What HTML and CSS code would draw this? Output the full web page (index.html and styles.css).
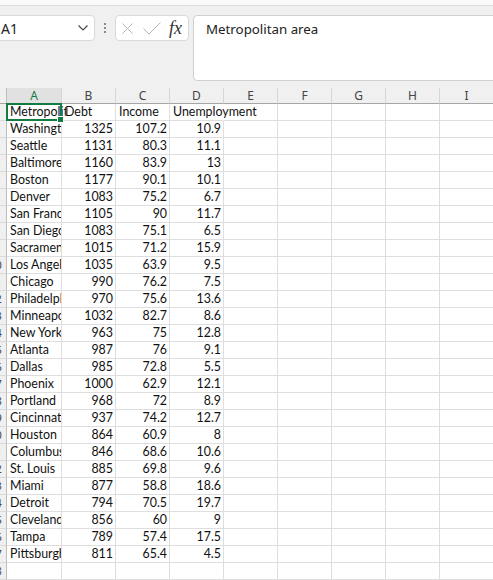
FILE: index.html
```html
<!DOCTYPE html>
<html>
<head>
<meta charset="utf-8">
<link rel="stylesheet" href="styles.css">
</head>
<body>
<div class="topstrip"></div>
<div class="formula-row">
  <div class="namebox">
    <span class="ref">A1</span>
    <svg class="chev" width="10" height="6" viewBox="0 0 10 6"><path d="M0.5 0.5 L5 5 L9.5 0.5" fill="none" stroke="#444" stroke-width="1.1"/></svg>
  </div>
  <div class="dots"><span></span><span></span><span></span></div>
  <div class="fxbox">
    <svg class="ic-x" width="11" height="11" viewBox="0 0 11 11"><path d="M0.5 0.5 L10.5 10.5 M10.5 0.5 L0.5 10.5" stroke="#b4b4b4" stroke-width="1" fill="none"/></svg>
    <svg class="ic-ok" width="18" height="13" viewBox="0 0 18 13"><path d="M0.5 6.5 L6 12 L17.5 0.5" stroke="#b4b4b4" stroke-width="1" fill="none"/></svg>
    <span class="fx">fx</span>
  </div>
  <div class="formula-input">Metropolitan area</div>
</div>
<table class="sheet">
  <colgroup><col class="c-rh"><col class="c-a"><col class="c"><col class="c"><col class="c"><col class="c"><col class="c"><col class="c"><col class="c"><col class="c"></colgroup>
  <thead>
    <tr><th class="corner"></th><th class="sel">A</th><th>B</th><th>C</th><th>D</th><th>E</th><th>F</th><th>G</th><th>H</th><th>I</th></tr>
  </thead>
  <tbody>
    <tr><th>1</th><td class="active">Metropolitan area<span class="cursor"><span class="handle"></span></span></td><td>Debt</td><td>Income</td><td class="spill">Unemployment</td><td></td><td></td><td></td><td></td><td></td></tr>
    <tr><th>2</th><td>Washington</td><td class="n">1325</td><td class="n">107.2</td><td class="n">10.9</td><td></td><td></td><td></td><td></td><td></td></tr>
    <tr><th>3</th><td>Seattle</td><td class="n">1131</td><td class="n">80.3</td><td class="n">11.1</td><td></td><td></td><td></td><td></td><td></td></tr>
    <tr><th>4</th><td>Baltimore</td><td class="n">1160</td><td class="n">83.9</td><td class="n">13</td><td></td><td></td><td></td><td></td><td></td></tr>
    <tr><th>5</th><td>Boston</td><td class="n">1177</td><td class="n">90.1</td><td class="n">10.1</td><td></td><td></td><td></td><td></td><td></td></tr>
    <tr><th>6</th><td>Denver</td><td class="n">1083</td><td class="n">75.2</td><td class="n">6.7</td><td></td><td></td><td></td><td></td><td></td></tr>
    <tr><th>7</th><td>San Francisco</td><td class="n">1105</td><td class="n">90</td><td class="n">11.7</td><td></td><td></td><td></td><td></td><td></td></tr>
    <tr><th>8</th><td>San Diego</td><td class="n">1083</td><td class="n">75.1</td><td class="n">6.5</td><td></td><td></td><td></td><td></td><td></td></tr>
    <tr><th>9</th><td>Sacramento</td><td class="n">1015</td><td class="n">71.2</td><td class="n">15.9</td><td></td><td></td><td></td><td></td><td></td></tr>
    <tr><th>10</th><td>Los Angeles</td><td class="n">1035</td><td class="n">63.9</td><td class="n">9.5</td><td></td><td></td><td></td><td></td><td></td></tr>
    <tr><th>11</th><td>Chicago</td><td class="n">990</td><td class="n">76.2</td><td class="n">7.5</td><td></td><td></td><td></td><td></td><td></td></tr>
    <tr><th>12</th><td>Philadelphia</td><td class="n">970</td><td class="n">75.6</td><td class="n">13.6</td><td></td><td></td><td></td><td></td><td></td></tr>
    <tr><th>13</th><td>Minneapolis</td><td class="n">1032</td><td class="n">82.7</td><td class="n">8.6</td><td></td><td></td><td></td><td></td><td></td></tr>
    <tr><th>14</th><td>New York</td><td class="n">963</td><td class="n">75</td><td class="n">12.8</td><td></td><td></td><td></td><td></td><td></td></tr>
    <tr><th>15</th><td>Atlanta</td><td class="n">987</td><td class="n">76</td><td class="n">9.1</td><td></td><td></td><td></td><td></td><td></td></tr>
    <tr><th>16</th><td>Dallas</td><td class="n">985</td><td class="n">72.8</td><td class="n">5.5</td><td></td><td></td><td></td><td></td><td></td></tr>
    <tr><th>17</th><td>Phoenix</td><td class="n">1000</td><td class="n">62.9</td><td class="n">12.1</td><td></td><td></td><td></td><td></td><td></td></tr>
    <tr><th>18</th><td>Portland</td><td class="n">968</td><td class="n">72</td><td class="n">8.9</td><td></td><td></td><td></td><td></td><td></td></tr>
    <tr><th>19</th><td>Cincinnati</td><td class="n">937</td><td class="n">74.2</td><td class="n">12.7</td><td></td><td></td><td></td><td></td><td></td></tr>
    <tr><th>20</th><td>Houston</td><td class="n">864</td><td class="n">60.9</td><td class="n">8</td><td></td><td></td><td></td><td></td><td></td></tr>
    <tr><th>21</th><td>Columbus</td><td class="n">846</td><td class="n">68.6</td><td class="n">10.6</td><td></td><td></td><td></td><td></td><td></td></tr>
    <tr><th>22</th><td>St. Louis</td><td class="n">885</td><td class="n">69.8</td><td class="n">9.6</td><td></td><td></td><td></td><td></td><td></td></tr>
    <tr><th>23</th><td>Miami</td><td class="n">877</td><td class="n">58.8</td><td class="n">18.6</td><td></td><td></td><td></td><td></td><td></td></tr>
    <tr><th>24</th><td>Detroit</td><td class="n">794</td><td class="n">70.5</td><td class="n">19.7</td><td></td><td></td><td></td><td></td><td></td></tr>
    <tr><th>25</th><td>Cleveland</td><td class="n">856</td><td class="n">60</td><td class="n">9</td><td></td><td></td><td></td><td></td><td></td></tr>
    <tr><th>26</th><td>Tampa</td><td class="n">789</td><td class="n">57.4</td><td class="n">17.5</td><td></td><td></td><td></td><td></td><td></td></tr>
    <tr><th>27</th><td>Pittsburgh</td><td class="n">811</td><td class="n">65.4</td><td class="n">4.5</td><td></td><td></td><td></td><td></td><td></td></tr>
    <tr><th>28</th><td></td><td></td><td></td><td></td><td></td><td></td><td></td><td></td><td></td></tr>
  </tbody>
</table>
</body>
</html>
```
FILE: styles.css
```css
html, body {
  margin: 0;
  padding: 0;
}
body {
  width: 493px;
  height: 580px;
  overflow: hidden;
  background: #f0f0f0;
  font-family: "Noto Sans", "Open Sans", sans-serif;
  color: #222;
}
.topstrip {
  height: 5px;
  background: #fafafa;
  border-bottom: 1px solid #dcdcdc;
}
.formula-row {
  display: flex;
  align-items: flex-start;
  padding-top: 9px;
  margin-bottom: 7px;
}
.namebox {
  box-sizing: border-box;
  margin-left: -8px;
  width: 103px;
  height: 26px;
  background: #fff;
  border: 1px solid #dadada;
  border-radius: 4px;
  display: flex;
  align-items: center;
  padding-left: 8px;
  padding-right: 6px;
}
.ref {
  flex: 1;
  font-size: 14px;
  color: #222;
}
.chev {
  display: block;
}
.dots {
  width: 20px;
  height: 26px;
  display: flex;
  flex-direction: column;
  align-items: center;
  justify-content: center;
  gap: 2px;
}
.dots span {
  width: 2px;
  height: 2px;
  background: #8a8a8a;
}
.fxbox {
  box-sizing: border-box;
  width: 74px;
  height: 26px;
  background: #fff;
  border: 1px solid #dadada;
  border-radius: 4px;
  display: flex;
  align-items: center;
  padding-left: 6px;
}
.fxbox svg {
  display: block;
}
.ic-x {
  margin-right: 10px;
}
.ic-ok {
  margin-right: 8px;
}
.fx {
  font-family: "Liberation Serif", serif;
  font-style: italic;
  font-size: 18px;
  color: #333;
  line-height: 1;
}
.formula-input {
  box-sizing: border-box;
  margin-left: 4px;
  flex: 1;
  margin-right: -20px;
  height: 66px;
  background: #fff;
  border: 1px solid #d0d0d0;
  border-radius: 4px;
  padding: 3px 12px;
  font-size: 13.3px;
  line-height: 20px;
  color: #222;
}
.sheet {
  margin-left: -15px;
  border-collapse: separate;
  border-spacing: 0;
  table-layout: fixed;
  width: 508px;
  background: #fff;
  font-family: "Lato", "Liberation Sans", sans-serif;
  font-size: 12.4px;
  color: #111;
}
.c-rh { width: 22px; }
.c-a { width: 55px; }
.c { width: 54px; }
.sheet thead th {
  box-sizing: border-box;
  height: 16px;
  padding: 0;
  background: #f0f0f0;
  border-right: 1px solid #d6d6d6;
  border-bottom: 1px solid #a6a6a6;
  font-family: "Noto Sans", "Open Sans", sans-serif;
  font-weight: normal;
  font-size: 12px;
  line-height: 15px;
  color: #444;
  text-align: center;
}
.sheet thead th.sel {
  background: #e1e1e1;
  color: #107c41;
}
.sheet thead th.corner {
  border-right-color: #bdbdbd;
}
.sheet tbody th {
  padding: 0;
  background: #f0f0f0;
  border-right: 1px solid #bdbdbd;
  border-bottom: 1px solid #dadada;
  font-family: "Noto Sans", "Open Sans", sans-serif;
  font-weight: normal;
  font-size: 11px;
  line-height: 16px;
  color: #444;
  text-align: center;
}
.sheet td {
  padding: 0 2px 0 3px;
  border-right: 1px solid #dedede;
  border-bottom: 1px solid #dedede;
  line-height: 16px;
  white-space: nowrap;
  overflow: hidden;
  text-overflow: clip;
}
.sheet td.n {
  text-align: right;
}
.sheet td.spill {
  overflow: visible;
  border-right-color: transparent;
}
.sheet td.active {
  position: relative;
  overflow: visible;
  clip-path: inset(-2px -4px -4px -2px);
}
.cursor {
  position: absolute;
  left: -1px;
  top: -1px;
  right: -1px;
  bottom: -1px;
  border: 2px solid #107c41;
  pointer-events: none;
}
.handle {
  position: absolute;
  right: -4px;
  bottom: -4px;
  width: 5px;
  height: 5px;
  background: #107c41;
  border: 1px solid #fff;
}
```
